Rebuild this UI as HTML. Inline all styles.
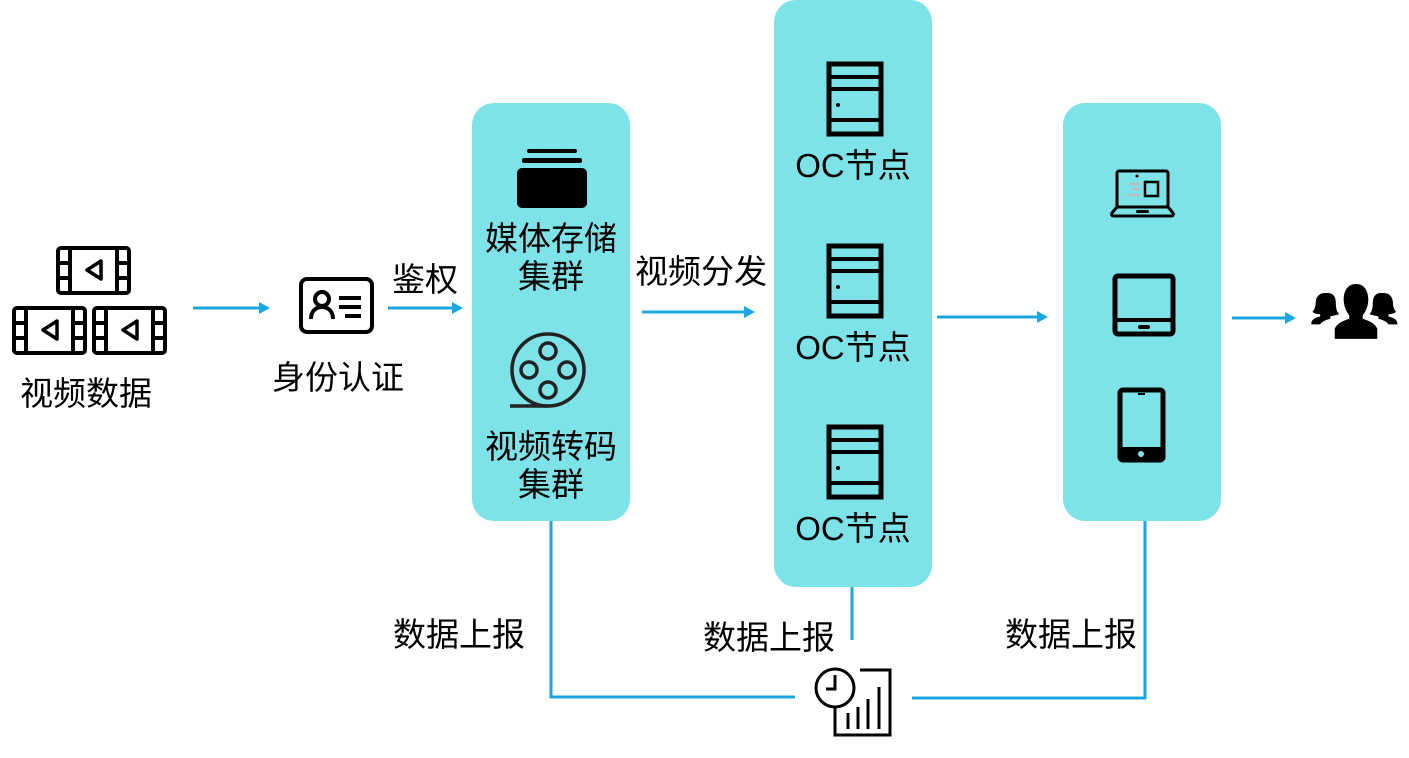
<!DOCTYPE html>
<html><head><meta charset="utf-8"><style>
body{margin:0;width:1409px;height:758px;background:#fff;position:relative;overflow:hidden;font-family:"Liberation Sans","Noto Sans CJK SC",sans-serif;color:#000}
.b{position:absolute;background:#7de3e8;border-radius:22px}
.t{position:absolute;font-size:33px;line-height:36px;white-space:nowrap;text-align:center}
svg{position:absolute;left:0;top:0}
</style></head><body>
<div class="b" style="left:472px;top:103px;width:158px;height:418px"></div>
<div class="b" style="left:774px;top:0;width:158px;height:587px"></div>
<div class="b" style="left:1063px;top:103px;width:158px;height:418px"></div>
<svg width="1409" height="758" viewBox="0 0 1409 758">
<g stroke="#1aa7e0" stroke-width="3" fill="none">
<path d="M193 308H262M388 308H455M642 312H747M937 317H1040M1232 318H1288"/>
<path d="M551 521V697H795M912 698H1145V521M852 587V640"/>
</g>
<g fill="#1aa7e0">
<path d="M270 308l-11-6v12z"/><path d="M463 308l-11-6v12z"/><path d="M755 312l-11-6v12z"/><path d="M1048 317l-11-6v12z"/><path d="M1296 318l-11-6v12z"/>
</g>
<g fill="none" stroke="#000" stroke-width="4">
<g id="f"><rect x="58" y="248" width="71" height="45" rx="3"/><path d="M70 248v45M117 248v45M58 263h12M58 278h12M117 263h12M117 278h12"/><path d="M101 261l-14 9 14 9z" stroke-width="3.5" stroke-linejoin="round"/></g>
<use href="#f" transform="translate(-44 60)"/><use href="#f" transform="translate(36 60)"/>
<rect x="301" y="279" width="71" height="53" rx="6"/>
<circle cx="322" cy="299" r="7" stroke-width="4"/><path d="M311 319c0-8 5-12 11-12s11 4 11 12" stroke-width="4"/>
<path d="M339 298h22M339 307h22M345 316h16" stroke-width="4"/>
<circle cx="548" cy="370" r="36" stroke="#222" stroke-width="3.5"/>
<circle cx="548" cy="351" r="8" stroke="#222" stroke-width="3.5"/><circle cx="548" cy="390" r="8" stroke="#222" stroke-width="3.5"/>
<circle cx="529" cy="370" r="8" stroke="#222" stroke-width="3.5"/><circle cx="567" cy="370" r="8" stroke="#222" stroke-width="3.5"/>
<path d="M510 406h38" stroke="#222" stroke-width="3.5"/>
<g id="s"><rect x="829" y="64" width="52" height="70" stroke-width="5"/><path d="M829 77h52M829 89h52M829 120h52" stroke-width="4"/></g>
<use href="#s" transform="translate(0 182)"/><use href="#s" transform="translate(0 363)"/>
<rect x="1117" y="171" width="51" height="36" rx="2" stroke-width="3"/>
<path d="M1117 207l-5 6c-1 2 0 3 2 3h57c2 0 3-1 2-3l-5-6" stroke-width="3"/>
<rect x="1145" y="182" width="13" height="14" stroke-width="2.5"/>
<path d="M1129 184h11M1132 189h8M1127 195h13" stroke="#bbb" stroke-width="2.5"/>
<rect x="1115" y="276" width="58" height="58" rx="3" stroke-width="5"/><path d="M1115 320h58" stroke-width="4"/>
<rect x="1120" y="390" width="43" height="70" rx="3" stroke-width="5"/>
<circle cx="835" cy="688" r="19" stroke-width="3"/><path d="M835 675v14h-9" stroke-width="3"/>
<path d="M860 670h30v65h-55v-27" stroke-width="3"/><path d="M848 713v16M858 707v22M868 699v30M879 687v42" stroke-width="3"/>
</g>
<g fill="#000">
<circle cx="1137" cy="176" r="1.5"/><rect x="1136" y="210" width="13" height="3" rx="1.5"/>
<rect x="1138" y="325" width="12" height="4" rx="2"/><rect x="1138" y="393" width="7" height="2"/><rect x="1120" y="447" width="43" height="13" rx="2"/>
<circle cx="1141" cy="454" r="3" fill="#7de3e8"/>
<circle cx="838" cy="105" r="2"/><circle cx="838" cy="287" r="2"/><circle cx="838" cy="468" r="2"/>
<rect x="517" y="168" width="70" height="40" rx="5"/><rect x="522" y="158" width="60" height="5" rx="2"/><rect x="527" y="149" width="50" height="4" rx="2"/>
<g transform="translate(1356 312) scale(1.12) translate(-1356 -312)">
<path d="M1356 287c8 0 11 7 11 14 0 6-3 12-5 14v3c6 2 11 4 13 9v9h-38v-9c2-5 7-7 13-9v-3c-2-2-5-8-5-14 0-7 3-14 11-14z"/>
<path d="M1331 295c5 0 7 4 7 9 0 5 1 8 3 10-3 1-5 1-8 2v2c-4 1-8 3-9 5h-8c0-4 3-6 8-7v-2c-3 0-5-1-7-2 2-2 3-5 3-8 0-5 3-9 8-9zM1381 295c5 0 8 4 8 9 0 3 1 6 3 8-2 1-4 2-7 2v2c5 1 8 3 8 7h-8c-1-2-5-4-9-5v-2c-3-1-5-1-8-2 2-2 3-5 3-10 0-5 2-9 7-9z"/>
</g>
</g>
</svg>
<div class="t" style="left:10px;top:376px;width:152px">视频数据</div>
<div class="t" style="left:262px;top:360px;width:152px">身份认证</div>
<div class="t" style="left:380px;top:262px;width:90px">鉴权</div>
<div class="t" style="left:476px;top:220px;width:150px;line-height:38px">媒体存储<br>集群</div>
<div class="t" style="left:476px;top:428px;width:150px;line-height:38px">视频转码<br>集群</div>
<div class="t" style="left:626px;top:254px;width:150px">视频分发</div>
<div class="t" style="left:778px;top:148px;width:150px">OC节点</div>
<div class="t" style="left:778px;top:330px;width:150px">OC节点</div>
<div class="t" style="left:778px;top:511px;width:150px">OC节点</div>
<div class="t" style="left:383px;top:617px;width:152px">数据上报</div>
<div class="t" style="left:693px;top:620px;width:152px">数据上报</div>
<div class="t" style="left:995px;top:617px;width:152px">数据上报</div>
</body></html>
